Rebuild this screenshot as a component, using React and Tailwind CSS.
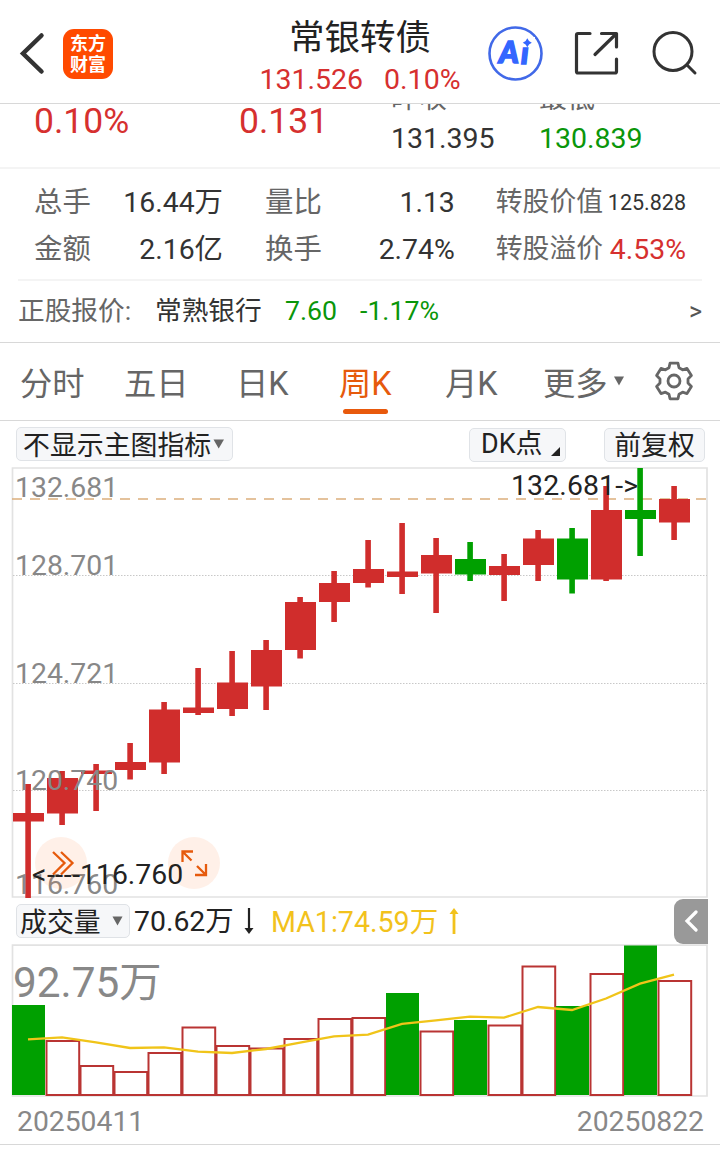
import React from 'react';

const RED = '#d02d2c';
const GREEN = '#00a000';

// [high, low, bodyTop, bodyBottom, rising]
const candles = [
  [784, 898, 813, 821.5, true],
  [771, 825, 778, 813.5, true],
  [764, 811, 770.5, 774, true],
  [743, 779.5, 762, 770, true],
  [702, 774, 709.5, 762.5, true],
  [668, 715, 707.5, 713, true],
  [651, 716, 682.5, 709, true],
  [640, 710, 650, 686.5, true],
  [597, 658.5, 602, 650, true],
  [571, 622, 583, 602, true],
  [540, 587.5, 569, 583, true],
  [523, 594, 571.5, 577, true],
  [538, 613, 555, 573.5, true],
  [542, 581, 559, 574.5, false],
  [554, 601, 566, 575, true],
  [530, 581, 538.5, 565, true],
  [528, 593.5, 538.5, 579.5, false],
  [486, 581, 510, 579.5, true],
  [468, 556, 510, 519, false],
  [486, 540, 499, 522.5, true],
];

// [top of bar, rising]
const volumes = [
  [1005, false],
  [1041, true],
  [1066, true],
  [1072, true],
  [1053, true],
  [1027.5, true],
  [1046, true],
  [1048.5, true],
  [1039, true],
  [1019, true],
  [1018, true],
  [993, false],
  [1031.5, true],
  [1020, false],
  [1025.5, true],
  [966.5, true],
  [1006, false],
  [974, true],
  [945.5, false],
  [981, true],
];

const ma = [
  1039.3, 1037.3, 1042.3, 1048, 1047.3, 1051.7, 1053, 1049, 1042.7, 1036.3,
  1034.6, 1023.8, 1020.3, 1016.6, 1017.6, 1007, 1010, 998.5, 983.6, 974.6,
];

const priceLabels = [
  ['132.681', 496.8],
  ['128.701', 574.8],
  ['124.721', 682.8],
  ['120.740', 789.8],
  ['116.760', 893.8],
];

const Header = () => (
  <header className="flex h-[104px] shrink-0 border-b border-[#d8d8d8]">
    <div className="flex w-[230px] items-center pl-[18px] pt-1">
      <svg width="28" height="44" viewBox="0 0 28 44" fill="none" stroke="#333" strokeWidth="4.5" strokeLinecap="round">
        <path d="M23.5 3.5 L5 21.5 L23.5 39.5" />
      </svg>
      <div className="ml-[17px] flex size-[50px] flex-col items-center justify-center rounded-[11px] bg-[#ff4a00] text-[18px] font-bold leading-[21px] text-white">
        <span>东方</span>
        <span>财富</span>
      </div>
    </div>
    <div className="flex w-[260px] flex-col items-center">
      <h1 className="mt-[15px] text-[35.5px] leading-[46px] text-[#222]">常银转债</h1>
      <div className="flex gap-[21px] text-[28.5px] leading-[38px] text-[#d6302f]">
        <span>131.526</span>
        <span>0.10%</span>
      </div>
    </div>
    <div className="flex flex-1 items-start pt-[25px]">
      <svg className="ml-[-3px]" width="56" height="56" viewBox="0 0 56 56">
        <circle cx="28.5" cy="28.5" r="26" fill="none" stroke="#4169e8" strokeWidth="2.6" />
        <g fontFamily="Lato" fontWeight="900" fontStyle="italic" fill="#3366ff" stroke="#3366ff" strokeWidth="1.6">
          <text x="12" y="38" fontSize="30">A</text>
          <text x="34" y="38.5" fontSize="30">i</text>
        </g>
        <rect x="35" y="12" width="13" height="10" fill="#fff" />
        <path d="M40.3 13.2 L42 16 L44.8 17.7 L42 19.4 L40.3 22.2 L38.6 19.4 L35.8 17.7 L38.6 16Z" fill="#3366ff" />
      </svg>
      <svg className="ml-[31px] mt-[5px]" width="46" height="46" viewBox="0 0 46 46" fill="none" stroke="#333" strokeWidth="3.2" strokeLinecap="round" strokeLinejoin="round">
        <path d="M16 3.5 H4 Q2.5 3.5 2.5 5 V41.5 Q2.5 43 4 43 H41 Q42.5 43 42.5 41.5 V29 M27.5 3.5 H42.5 V17 M42 4 L21 24.5" />
      </svg>
      <svg className="ml-[32px] mt-1" width="48" height="48" viewBox="0 0 48 48" fill="none" stroke="#333" strokeWidth="3" strokeLinecap="round">
        <circle cx="21" cy="22.5" r="19" />
        <path d="M35 36 L43 44" />
      </svg>
    </div>
  </header>
);

const Quote = () => (
  <section className="flex h-[65px] shrink-0 overflow-hidden border-b-2 border-[#f4f4f4] text-[28.5px] text-[#333]">
    <div className="w-[205px] pl-[34px] text-[35.5px] leading-[34px] text-[#d6302f]">0.10%</div>
    <div className="w-[186px] pl-[34px] text-[35.5px] leading-[34px] text-[#d6302f]">0.131</div>
    <div className="mt-[-20px] flex w-[148px] flex-col">
      <span className="text-[28px] leading-[30px] text-[#666]">昨收</span>
      <span className="mt-[5px] leading-[40px]">131.395</span>
    </div>
    <div className="mt-[-20px] flex flex-col">
      <span className="text-[28px] leading-[30px] text-[#666]">最低</span>
      <span className="mt-[5px] leading-[40px] text-[#0a960a]">130.839</span>
    </div>
  </section>
);

const Details = () => (
  <section className="mx-[18px] flex h-[112px] shrink-0 flex-col justify-center border-b-2 border-[#f4f4f4] pl-4 pr-4 pt-[3px] text-[28.4px] leading-[47px] text-[#333]">
    <div className="flex">
      <span className="w-[56px] whitespace-nowrap text-[#666]">总手</span>
      <span className="w-[133px] text-right">16.44万</span>
      <span className="ml-[42px] text-[#666]">量比</span>
      <span className="w-[133px] text-right">1.13</span>
      <span className="ml-[41px] text-[26.8px] text-[#666]">转股价值</span>
      <span className="flex-1 text-right text-[21.5px]">125.828</span>
    </div>
    <div className="flex">
      <span className="w-[56px] whitespace-nowrap text-[#666]">金额</span>
      <span className="w-[133px] text-right">2.16亿</span>
      <span className="ml-[42px] text-[#666]">换手</span>
      <span className="w-[133px] text-right">2.74%</span>
      <span className="ml-[41px] text-[26.8px] text-[#666]">转股溢价</span>
      <span className="flex-1 text-right text-[#d6302f]">4.53%</span>
    </div>
  </section>
);

const StockRow = () => (
  <section className="flex h-[62px] shrink-0 items-center border-b border-[#d8d8d8] pl-[18px] pr-[18px] text-[26.7px] text-[#333]">
    <span className="w-[137px] text-[#666]">正股报价:</span>
    <span className="w-[130px]">常熟银行</span>
    <span className="w-[75px] text-[#0a960a]">7.60</span>
    <span className="flex-1 text-[#0a960a]">-1.17%</span>
    <span className="text-[25px] text-[#555]">&gt;</span>
  </section>
);

const Tabs = () => (
  <nav className="flex h-[78px] shrink-0 border-b border-[#d8d8d8] pl-5 text-[32.3px] leading-[82px] text-[#666]">
    <span className="w-[104px]">分时</span>
    <span className="w-[112px]">五日</span>
    <span className="w-[103px]">日K</span>
    <span className="flex w-[106px] flex-col text-[#e65a0c]">
      周K
      <i className="-mt-[16px] ml-1 h-[5px] w-[45px] rounded-full bg-[#e8590c]" />
    </span>
    <span className="w-[98px]">月K</span>
    <span className="w-[70px]">更多</span>
    <svg className="mt-[33px]" width="12" height="11" viewBox="0 0 12 11">
      <path d="M1 0.5 H11 L6 9.5Z" fill="#666" />
    </svg>
    <svg className="ml-[29px] mt-[18px]" width="40" height="40" viewBox="-20 -20 40 40" fill="none" stroke="#666" strokeWidth="2.8" strokeLinejoin="round">
      <path d="M-4 -17.8 H4 L5 -13.2 L8.6 -11.2 L13 -12.6 L17.4 -5.4 L14 -2 V2 L17.4 5.4 L13 12.6 L8.6 11.2 L5 13.2 L4 17.8 H-4 L-5 13.2 L-8.6 11.2 L-13 12.6 L-17.4 5.4 L-14 2 V-2 L-17.4 -5.4 L-13 -12.6 L-8.6 -11.2 L-5 -13.2Z" />
      <circle r="6" />
    </svg>
  </nav>
);

const Toolbar = () => (
  <div className="flex h-[46px] shrink-0 items-start pl-4 pt-[6px] text-[26.9px] leading-[34px] text-[#222]">
    <button className="flex h-[34px] w-[217px] items-center rounded-[5px] border border-[#e0e3e7] bg-[#f6f7f9] pl-[6px]">
      <span className="mt-[3px]">不显示主图指标</span>
      <svg className="ml-[2px]" width="12" height="11" viewBox="0 0 12 11">
        <path d="M0.5 0.5 H11 L5.7 9.5Z" fill="#666" />
      </svg>
    </button>
    <button className="ml-[236px] mt-px flex h-[34px] w-[97px] items-end rounded-[5px] border border-[#e0e3e7] bg-[#f6f7f9] pl-[11px]">
      DK点
      <svg className="mb-[5px] ml-[9px]" width="9" height="9" viewBox="0 0 9 9">
        <path d="M9 0 V9 H0Z" fill="#222" />
      </svg>
    </button>
    <button className="ml-[38px] mt-px h-[34px] w-[101px] rounded-[5px] border border-[#e0e3e7] bg-[#f6f7f9]">前复权</button>
  </div>
);

const PriceChart = () => (
  <svg className="block shrink-0" width="720" height="431" viewBox="0 467 720 431" fontFamily="Roboto, 'Noto Sans CJK SC', sans-serif" fontSize="28.4">
    <path d="M12.5 897 V468 H707 V897Z" fill="none" stroke="#e2e2e2" strokeWidth="1.7" />
    {[575.5, 683.5, 790.5].map((y) => (
      <line key={y} x1="13" x2="707" y1={y} y2={y} stroke="#c8c8c8" strokeDasharray="1.5 1.5" />
    ))}
    <line x1="12" x2="707" y1="499" y2="499" stroke="#dcae7c" strokeWidth="1.5" strokeDasharray="10 8" />
    {candles.map(([high, low, top, bottom, rising], i) => (
      <g key={i} fill={rising ? RED : GREEN}>
        <rect x={25.3 + i * 34} y={high} width="5.6" height={low - high} />
        <rect x={13 + i * 34} y={top} width="31" height={bottom - top} />
      </g>
    ))}
    {priceLabels.map(([label, y]) => (
      <text key={label} x="15" y={y} fill="#888">{label}</text>
    ))}
    <circle cx="61" cy="863" r="26" fill="#ff7a30" fillOpacity="0.11" />
    <circle cx="194" cy="863" r="26" fill="#ff7a30" fillOpacity="0.11" />
    <g fill="none" stroke="#e65a0c" strokeWidth="2.3">
      <path d="M53 852 L64.5 863 L53 874.5 M61 852 L72.5 863 L61 874.5" />
      <path d="M182.5 862 V851.5 H193 M182.5 851.5 L191.5 860.5 M206 864 V875 H195 M206 875 L197 866" />
    </g>
    <text x="32" y="884" fill="#222" textLength="48">&lt;----</text>
    <text x="80" y="884" fill="#222">116.760</text>
    <text x="511" y="495" fill="#222" textLength="127">132.681-&gt;</text>
  </svg>
);

const VolumeBar = () => (
  <div className="flex h-[46px] shrink-0 items-center pl-4 text-[28.2px] text-[#222]">
    <button className="flex h-[34px] w-[114px] items-center rounded-[5px] border border-[#dfe2e6] bg-[#f6f7f9] pl-[3px] text-[26.9px] leading-[32px]">
      <span className="mt-[3px]">成交量</span>
      <svg className="ml-[11px]" width="11" height="10" viewBox="0 0 11 10">
        <path d="M0.5 0.5 H10.5 L5.5 9.5Z" fill="#666" />
      </svg>
    </button>
    <span className="ml-1 mt-[2px] w-[110px] text-[28.4px]">70.62万</span>
    <svg width="10" height="28" viewBox="0 0 10 28">
      <path d="M5 1 V24" stroke="#222" strokeWidth="2.2" />
      <path d="M0.5 21 H9.5 L5 27Z" fill="#222" />
    </svg>
    <span className="ml-[17px] mt-[2px] w-[178px] text-[28.6px] text-[#f2c21c]">MA1:74.59万</span>
    <svg width="10" height="28" viewBox="0 0 10 28">
      <path d="M5 4 V27" stroke="#f2c21c" strokeWidth="2.8" />
      <path d="M0.5 7 H9.5 L5 1Z" fill="#f2c21c" />
    </svg>
    <div className="ml-auto mr-3 flex h-[45px] w-[34px] items-center justify-center rounded-l-[9px] bg-[#999]">
      <svg width="14" height="22" viewBox="0 0 14 22" fill="none" stroke="#fff" strokeWidth="3.2" strokeLinecap="round">
        <path d="M12 2 L3 11 L12 20" />
      </svg>
    </div>
  </div>
);

const VolumeChart = () => (
  <svg className="block shrink-0" width="720" height="153" viewBox="0 944 720 153" fontFamily="Roboto, 'Noto Sans CJK SC', sans-serif">
    <path d="M12.5 1096 V945.2 H707 V1096Z" fill="none" stroke="#e2e2e2" strokeWidth="1.7" />
    <text x="13" y="997" fontSize="42.3" fill="#888">92.75万</text>
    {volumes.map(([top, rising], i) =>
      rising ? (
        <rect key={i} x={12.5 + i * 34} y={top} width="32.7" height={1095 - top} fill="#fff" stroke="#b93433" strokeWidth="2" />
      ) : (
        <rect key={i} x={12 + i * 34} y={top} width="33" height={1095 - top} fill={GREEN} />
      )
    )}
    <polyline points={ma.map((y, i) => `${28 + i * 34},${y}`).join(' ')} fill="none" stroke="#f0c419" strokeWidth="2.3" />
  </svg>
);

export default function App() {
  return (
    <main className="flex h-[1158px] w-[720px] flex-col overflow-hidden bg-white font-[Roboto,'Noto_Sans_CJK_SC',sans-serif]">
      <Header />
      <Quote />
      <Details />
      <StockRow />
      <Tabs />
      <Toolbar />
      <PriceChart />
      <VolumeBar />
      <VolumeChart />
      <footer className="flex h-[48px] shrink-0 justify-between border-b border-[#d8d8d8] pl-[17px] pr-4 text-[28.3px] leading-[49px] text-[#888]">
        <span>20250411</span>
        <span>20250822</span>
      </footer>
    </main>
  );
}
